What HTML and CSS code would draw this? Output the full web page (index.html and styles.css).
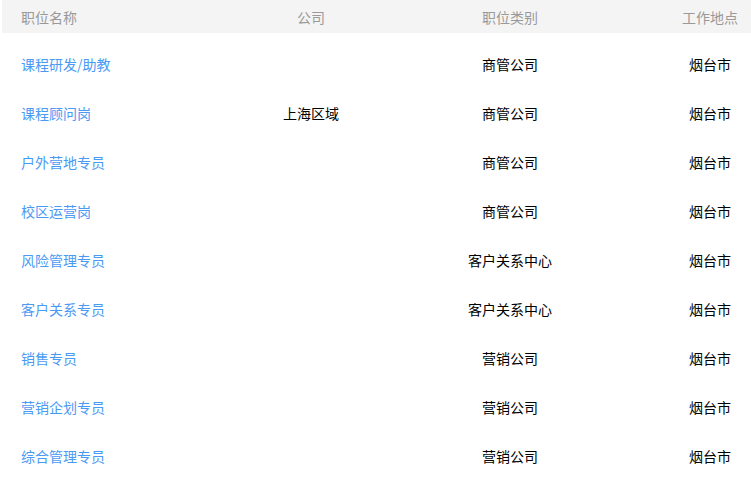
FILE: index.html
```html
<!DOCTYPE html>
<html lang="zh">
<head>
<meta charset="utf-8">
<link rel="stylesheet" href="styles.css">
</head>
<body>
<div class="table">
  <div class="row head">
    <div class="c1">职位名称</div>
    <div class="c2">公司</div>
    <div class="c3">职位类别</div>
    <div class="c4">工作地点</div>
  </div>
  <div class="body">
    <div class="row"><div class="c1 link">课程研发/助教</div><div class="c2"></div><div class="c3">商管公司</div><div class="c4">烟台市</div></div>
    <div class="row"><div class="c1 link">课程顾问岗</div><div class="c2">上海区域</div><div class="c3">商管公司</div><div class="c4">烟台市</div></div>
    <div class="row"><div class="c1 link">户外营地专员</div><div class="c2"></div><div class="c3">商管公司</div><div class="c4">烟台市</div></div>
    <div class="row"><div class="c1 link">校区运营岗</div><div class="c2"></div><div class="c3">商管公司</div><div class="c4">烟台市</div></div>
    <div class="row"><div class="c1 link">风险管理专员</div><div class="c2"></div><div class="c3">客户关系中心</div><div class="c4">烟台市</div></div>
    <div class="row"><div class="c1 link">客户关系专员</div><div class="c2"></div><div class="c3">客户关系中心</div><div class="c4">烟台市</div></div>
    <div class="row"><div class="c1 link">销售专员</div><div class="c2"></div><div class="c3">营销公司</div><div class="c4">烟台市</div></div>
    <div class="row"><div class="c1 link">营销企划专员</div><div class="c2"></div><div class="c3">营销公司</div><div class="c4">烟台市</div></div>
    <div class="row"><div class="c1 link">综合管理专员</div><div class="c2"></div><div class="c3">营销公司</div><div class="c4">烟台市</div></div>
  </div>
</div>
</body>
</html>
```
FILE: styles.css
```css
html, body {
  margin: 0;
  padding: 0;
  background: #fff;
}
body {
  font-family: "Noto Sans CJK SC", "Microsoft YaHei", sans-serif;
  font-size: 14px;
  color: #000;
}
.table {
  margin-left: 2px;
}
.row {
  display: grid;
  grid-template-columns: 269px 80px 318px 82px;
  height: 49px;
  align-items: center;
}
.row.head {
  height: 33px;
  background: #f4f4f4;
  color: #999;
}
.body {
  padding-top: 6px;
}
.c1 {
  padding-left: 19px;
}
.c2, .c3, .c4 {
  text-align: center;
  white-space: nowrap;
}
.link {
  color: #4a9af4;
}
```
